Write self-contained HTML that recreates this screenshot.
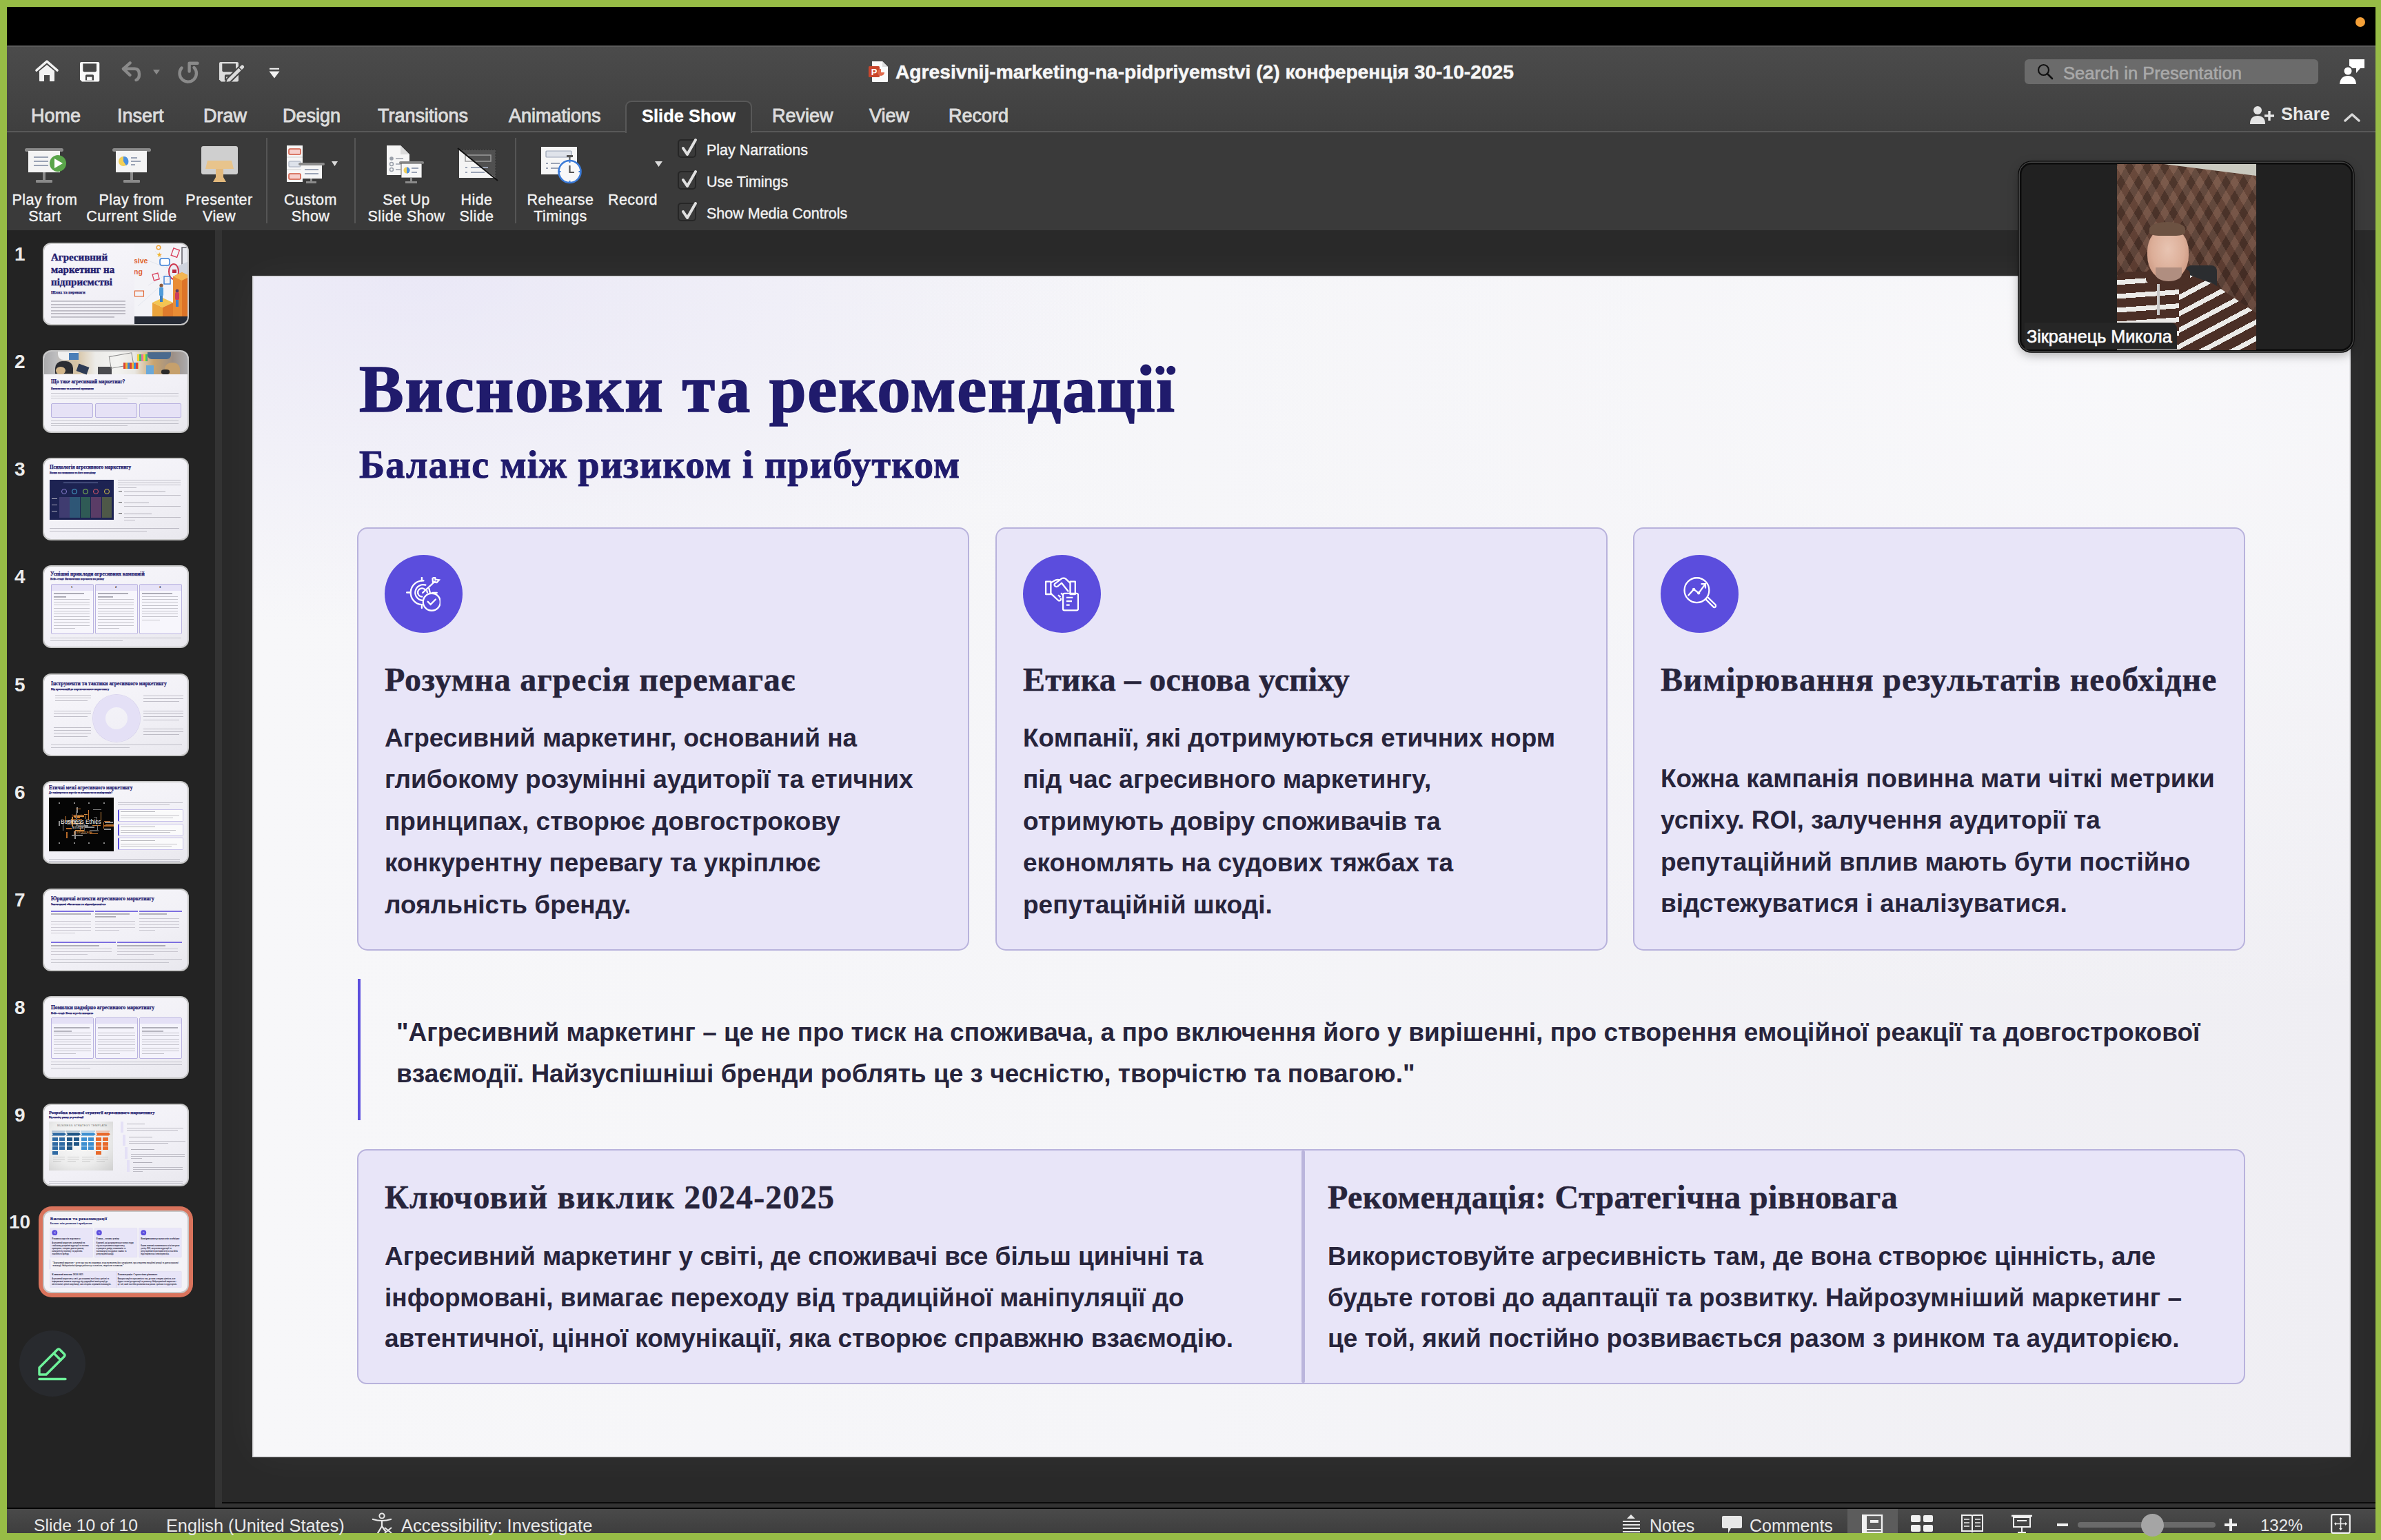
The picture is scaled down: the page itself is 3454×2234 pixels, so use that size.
<!DOCTYPE html>
<html><head><meta charset="utf-8">
<style>
*{margin:0;padding:0;box-sizing:border-box}
html,body{width:3454px;height:2234px;overflow:hidden;background:#97bc46;font-family:"Liberation Sans",sans-serif}
.a{position:absolute}
.t{position:absolute;white-space:nowrap;line-height:1}
/* chrome */
#black{left:10px;top:10px;width:3436px;height:56px;background:#000}
#tool{left:10px;top:66px;width:3436px;height:125px;background:linear-gradient(#4b4b4b,#3f3f3f);border-top:2px solid #5c5c5c}
#ribbon{left:10px;top:191px;width:3436px;height:143px;background:#3a3a3a}
#panel{left:10px;top:334px;width:302px;height:1854px;background:#232323}
#mainbot{left:322px;top:2179px;width:3124px;height:9px;background:#333;border-top:2px solid #0a0a0a}
#strip{left:312px;top:334px;width:10px;height:1854px;background:#333}
#main{left:322px;top:334px;width:3124px;height:1845px;background:#292929}
#status{left:10px;top:2187px;width:3436px;height:37px;background:linear-gradient(#4a4a4a,#3e3e3e);border-top:2px solid #000}
.tab{font-size:27px;color:#dcdcdc;-webkit-text-stroke:0.9px #dcdcdc}
.rb{font-size:21.5px;color:#f2f2f2;-webkit-text-stroke:0.4px #f2f2f2;text-align:center;line-height:23.5px;white-space:nowrap}
.sb{font-size:25px;color:#e8e8e8}

.th{position:absolute;left:62px;width:212px;height:120px;border-radius:12px;border:2px solid #c6c6c6;background:linear-gradient(160deg,#f8f7fb 0%,#f1f0f6 60%,#e9e8ee 100%);overflow:hidden}
.num{position:absolute;font-size:28px;font-weight:700;color:#ececec;line-height:1;white-space:nowrap}
.tt{position:absolute;font-family:"Liberation Serif",serif;font-weight:700;color:#24206f;white-space:nowrap;line-height:1;-webkit-text-stroke:0.25px #24206f}
.ln{position:absolute;height:1.6px;background:#8f8c9c;opacity:.55;transform:scaleY(.7)}
.bx{position:absolute;background:#e6e2f6;border:1px solid #b9b2e0;border-radius:2px}
/* slide */
#slide{left:366px;top:400px;width:3044px;height:1714px;background:radial-gradient(ellipse 35% 30% at 8% 0%,rgba(222,218,244,.5) 0%,rgba(222,218,244,0) 100%),radial-gradient(ellipse 60% 55% at 88% 8%,rgba(249,249,251,.9) 0%,rgba(249,249,251,0) 100%),linear-gradient(90deg,#f7f7f9 0%,#f5f5f8 45%,#efeef3 100%);box-shadow:inset 0 0 0 1.5px #d4d4d7,0 0 60px rgba(255,255,255,.045);overflow:hidden}
.ser{font-family:"Liberation Serif",serif;font-weight:700}
.card{position:absolute;top:365px;width:888px;height:614px;background:#e8e5f8;border:2px solid #b8b2dc;border-radius:15px}
.circ{position:absolute;width:113px;height:113px;border-radius:50%;background:#5b4ddd;top:38px;left:38px}
.ch{position:absolute;left:38px;font-size:48px;color:#27243b;-webkit-text-stroke:0.5px #27243b;white-space:nowrap;line-height:1}
.bd{position:absolute;left:38px;font-size:37px;font-weight:700;color:#27243b;line-height:60.45px;white-space:nowrap}
</style></head><body>
<div id="black" class="a"></div>
<div class="a" style="left:3417px;top:25px;width:14px;height:14px;border-radius:50%;background:#f4a038"></div>
<div id="tool" class="a"></div>
<div id="ribbon" class="a"></div>
<div id="panel" class="a"></div>
<div id="strip" class="a"></div>
<div id="main" class="a"></div>
<div id="mainbot" class="a"></div>
<div id="status" class="a"></div>

<!-- QUICK ACCESS -->
<svg class="a" style="left:50px;top:86px" width="36" height="34" viewBox="0 0 36 34">
 <path d="M3 16 L18 3 L33 16" fill="none" stroke="#f2f2f2" stroke-width="3.6" stroke-linecap="round" stroke-linejoin="round"/>
 <path d="M7 17 L18 8 L29 17 V31 Q29 32 28 32 H22 V23 H14 V32 H8 Q7 32 7 31 Z" fill="#f2f2f2"/>
</svg>
<svg class="a" style="left:116px;top:89.6px" width="29" height="29" viewBox="0 0 29 29">
 <path d="M2 0 H26.3 Q28.3 0 28.3 2 V26.4 Q28.3 28.4 26.3 28.4 H3 L0 25.4 V2 Q0 0 2 0 Z" fill="#fafafa"/>
 <path d="M4.3 2.3 H24 V12.2 Q24 14.2 22 14.2 H6.3 Q4.3 14.2 4.3 12.2 Z" fill="#474747"/>
 <path d="M7.9 26.4 V20 Q7.9 18.2 9.7 18.2 H18.3 Q20.1 18.2 20.1 20 V26.4 Z" fill="#474747"/>
 <rect x="10.1" y="21.6" width="7.4" height="4.8" fill="#fafafa"/>
</svg>
<svg class="a" style="left:176px;top:88px" width="60" height="34" viewBox="0 0 60 34">
 <path d="M3 11.8 H19.5 Q26 11.8 26 19.8 Q26 26.5 21.5 28" fill="none" stroke="#8a8a8a" stroke-width="4.4" stroke-linecap="round"/>
 <path d="M12.6 3.3 L3 11.8 L12.4 20.9" fill="none" stroke="#8a8a8a" stroke-width="4.4" stroke-linecap="round" stroke-linejoin="round"/>
 <path d="M45.9 13 H56 L51 20.3 Z" fill="#8a8a8a"/>
</svg>
<svg class="a" style="left:256px;top:88px" width="34" height="34" viewBox="0 0 34 34">
 <path d="M7.5 10.5 A12.2 12.2 0 1 0 25.5 10" fill="none" stroke="#8a8a8a" stroke-width="4.4" stroke-linecap="round"/>
 <path d="M30.5 3.8 H18.6 V15.5" fill="none" stroke="#8a8a8a" stroke-width="4.4" stroke-linecap="round" stroke-linejoin="round"/>
</svg>
<svg class="a" style="left:317.7px;top:90px" width="38" height="29" viewBox="0 0 38 29">
 <path d="M2 0 H26 Q28 0 28 2 V26.4 Q28 28.4 26 28.4 H3 L0 25.4 V2 Q0 0 2 0 Z" fill="#dcdcdc"/>
 <path d="M4.3 2.3 H24 V12.2 Q24 14.2 22 14.2 H6.3 Q4.3 14.2 4.3 12.2 Z" fill="#474747"/>
 <path d="M7.9 26.4 V20 Q7.9 18.2 9.7 18.2 H18.3 Q20.1 18.2 20.1 20 V26.4 Z" fill="#474747"/>
 <rect x="10.1" y="21.6" width="7.4" height="4.8" fill="#dcdcdc"/>
 <path d="M11 24.5 L31 4.5 Q33.5 2 36 4.5 Q38.5 7 36 9.5 L16 29 L9 30 Z" fill="#dcdcdc" stroke="#474747" stroke-width="2"/>
 <path d="M28 7.5 L33 12.5" stroke="#474747" stroke-width="1.6"/>
</svg>
<svg class="a" style="left:390px;top:98px" width="16" height="16" viewBox="0 0 16 16">
 <rect x="1" y="0.8" width="14" height="2" fill="#f2f2f2"/>
 <path d="M0.5 5.4 H15.5 L8 15.5 Z" fill="#f2f2f2"/>
</svg>

<!-- TITLE -->
<svg class="a" style="left:1259px;top:88px" width="31" height="33" viewBox="0 0 31 33">
 <path d="M6 1 H21 L29 9 V30 Q29 31 28 31 H7 Q6 31 6 30 Z" fill="#fafafa"/>
 <path d="M21 1 V9 H29" fill="#ddd"/>
 <rect x="1" y="8" width="16" height="16" rx="1.5" fill="#c9462c"/>
 <text x="9" y="21" font-family="Liberation Sans" font-weight="700" font-size="13" fill="#fff" text-anchor="middle">P</text>
 <path d="M19 12 A5 5 0 1 0 24 17 H19 Z" fill="#e06a4c"/>
</svg>
<div class="t" style="left:1299px;top:90px;font-size:28.2px;font-weight:700;color:#f7f7f7;-webkit-text-stroke:0.5px #f7f7f7">Agresivnij-marketing-na-pidpriyemstvi (2) конференція 30-10-2025</div>

<!-- SEARCH -->
<div class="a" style="left:2937px;top:86px;width:426px;height:36px;background:#6b6b6b;border-radius:6px"></div>
<svg class="a" style="left:2955px;top:92px" width="24" height="24" viewBox="0 0 24 24">
 <circle cx="9.5" cy="9.5" r="7.5" fill="none" stroke="#111" stroke-width="2.2"/>
 <path d="M15 15 L22 22" stroke="#111" stroke-width="2.6" stroke-linecap="round"/>
</svg>
<div class="t" style="left:2993px;top:94px;font-size:25.6px;color:#a9a9a9;-webkit-text-stroke:0.6px #a9a9a9">Search in Presentation</div>
<svg class="a" style="left:3394px;top:85px" width="38" height="38" viewBox="0 0 38 38">
 <path d="M14 1 H36 V14 H30 L24 21 V14 H14 Z" fill="#fff"/>
 <circle cx="12" cy="18" r="6.5" fill="#fff" stroke="#474747" stroke-width="2"/>
 <path d="M0 37 Q1 25 12 25 Q23 25 24 37 Z" fill="#fff"/>
</svg>

<!-- SHARE -->
<svg class="a" style="left:3264px;top:153px" width="38" height="28" viewBox="0 0 38 28">
 <circle cx="11" cy="7" r="6" fill="#e4e4e4"/>
 <path d="M0 27 Q0 15 11 15 Q22 15 22 27 Z" fill="#e4e4e4"/>
 <path d="M28 8 V22 M21 15 H35" stroke="#e4e4e4" stroke-width="3.4"/>
</svg>
<div class="t" style="left:3309px;top:153px;font-size:25.5px;font-weight:700;color:#e8e8e8">Share</div>
<svg class="a" style="left:3400px;top:163px" width="24" height="14" viewBox="0 0 24 14">
 <path d="M2 12 L12 3 L22 12" fill="none" stroke="#d8d8d8" stroke-width="3.4" stroke-linecap="round" stroke-linejoin="round"/>
</svg>


<!-- RIBBON -->
<svg class="a" style="left:34px;top:212px" width="66" height="56" viewBox="0 0 66 56">
 <rect x="2" y="3" width="56" height="5" rx="2.5" fill="#8a8a8a"/>
 <rect x="7" y="7" width="46" height="31" fill="#f4f4f4"/>
 <path d="M15 16 H36 M15 22 H36 M15 28 H36" stroke="#9aa3b5" stroke-width="2"/>
 <rect x="28" y="38" width="4" height="14" fill="#8a8a8a"/>
 <rect x="18" y="49" width="24" height="4" rx="1" fill="#8a8a8a"/>
 <circle cx="50" cy="25" r="12" fill="#5aa54a"/>
 <path d="M45 18 L57 25 L45 32 Z" fill="#fff"/>
</svg>
<svg class="a" style="left:161px;top:212px" width="60" height="56" viewBox="0 0 60 56">
 <rect x="2" y="3" width="56" height="5" rx="2.5" fill="#8a8a8a"/>
 <rect x="7" y="7" width="45" height="31" fill="#f4f4f4"/>
 <circle cx="18" cy="22" r="7" fill="#f2cf57"/>
 <path d="M18 15 A7 7 0 0 1 22 28 L18 22 Z" fill="#4a8fe0"/>
 <path d="M29 17 H38 M29 22 H43 M29 27 H35" stroke="#9aa3b5" stroke-width="2"/>
 <rect x="28" y="38" width="4" height="14" fill="#8a8a8a"/>
 <rect x="18" y="49" width="24" height="4" rx="1" fill="#8a8a8a"/>
</svg>
<svg class="a" style="left:291px;top:211px" width="56" height="56" viewBox="0 0 56 56">
 <rect x="1" y="1" width="53" height="41" rx="3" fill="#cfcfcf"/>
 <path d="M10 22 H45 L48 34 H7 Z" fill="#e8c48c"/>
 <path d="M22 34 H33 V46 L37 53 H18 L22 46 Z" fill="#e3b97c"/>
</svg>
<svg class="a" style="left:414px;top:210px" width="80" height="58" viewBox="0 0 80 58">
 <rect x="2" y="1" width="23" height="53" fill="#f6f6f6"/>
 <path d="M2 18 H25 M2 36 H25" stroke="#cfcfcf" stroke-width="1"/>
 <rect x="5" y="6" width="17" height="8" rx="1.5" fill="#f6d0cc" stroke="#d0553e" stroke-width="1.5"/>
 <rect x="5" y="24" width="17" height="8" rx="1.5" fill="#dde2ea" stroke="#b8bfcc" stroke-width="1.5"/>
 <rect x="5" y="42" width="17" height="8" rx="1.5" fill="#f6d0cc" stroke="#d0553e" stroke-width="1.5"/>
 <rect x="19" y="26" width="38" height="4" rx="2" fill="#8a8a8a"/>
 <rect x="23" y="30" width="30" height="19" fill="#f6f6f6"/>
 <path d="M28 36 H48 M28 42 H48" stroke="#9aa3b5" stroke-width="2"/>
 <rect x="36" y="49" width="3" height="5" fill="#8a8a8a"/>
 <rect x="30" y="53" width="15" height="3" fill="#8a8a8a"/>
 <path d="M67 24 H76 L71.5 31 Z" fill="#dcdcdc"/>
</svg>
<svg class="a" style="left:559px;top:210px" width="60" height="58" viewBox="0 0 60 58">
 <path d="M2 1 H22 L35 14 V44 H2 Z" fill="#f6f6f6"/>
 <path d="M22 1 V14 H35" fill="#dadada"/>
 <circle cx="9" cy="20" r="2.8" fill="#9aa0aa"/><circle cx="9" cy="28" r="2.5" fill="none" stroke="#9aa0aa" stroke-width="1.5"/><circle cx="9" cy="36" r="2.5" fill="none" stroke="#9aa0aa" stroke-width="1.5"/>
 <path d="M15 20 H26 M15 28 H22 M15 36 H22" stroke="#9aa0aa" stroke-width="1.6"/>
 <rect x="20" y="24" width="36" height="4" rx="2" fill="#8a8a8a"/>
 <rect x="23" y="27" width="30" height="21" fill="#f6f6f6" stroke="#3a3a3a" stroke-width="0.8"/>
 <circle cx="31" cy="37" r="4.5" fill="#f2cf57"/><path d="M31 32.5 A4.5 4.5 0 0 1 31 41.5 Z" fill="#4a8fe0"/>
 <path d="M38 34 H48 M38 40 H46" stroke="#9aa3b5" stroke-width="1.8"/>
 <rect x="36" y="48" width="3" height="6" fill="#8a8a8a"/>
 <rect x="29" y="53" width="17" height="3" fill="#8a8a8a"/>
</svg>
<svg class="a" style="left:663px;top:213px" width="60" height="52" viewBox="0 0 60 52">
 <rect x="3" y="4" width="53" height="41" fill="#f4f4f4"/>
 <path d="M3 4 H56 V45 Z" fill="#505050"/>
 <path d="M3 4 H56 V45" fill="none" stroke="#2a2a2a" stroke-width="1" stroke-dasharray="2 2"/>
 <rect x="12" y="12" width="37" height="9" fill="none" stroke="#9a9a9a" stroke-width="1.5"/>
 <path d="M12 30 H15 M20 30 H45 M12 37 H15 M20 37 H40" stroke="#9aa3b5" stroke-width="2"/>
 <path d="M1 2 L59 49" stroke="#111" stroke-width="2"/>
</svg>
<svg class="a" style="left:782px;top:211px" width="66" height="62" viewBox="0 0 66 62">
 <rect x="3" y="2" width="52" height="40" fill="#f6f6f6"/>
 <rect x="10" y="8" width="37" height="9" rx="1" fill="#dfe3ea" stroke="#9aa3b5" stroke-width="1.2"/>
 <path d="M10 26 H13 M17 26 H30 M10 33 H13 M17 33 H28" stroke="#9aa3b5" stroke-width="2"/>
 <rect x="40" y="14" width="9" height="3" fill="#555"/>
 <rect x="43.5" y="16" width="2" height="5" fill="#555"/>
 <circle cx="44.5" cy="38" r="16" fill="#f8f8f8" stroke="#3b7bd8" stroke-width="2.6"/>
 <path d="M44.5 29 V39 H51" fill="none" stroke="#555" stroke-width="2.2"/>
 <path d="M44.5 22 V25 M44.5 51 V54 M28.5 38 H31.5 M57.5 38 H60.5" stroke="#3b7bd8" stroke-width="2"/>
</svg>
<svg class="a" style="left:949px;top:233px" width="13" height="10" viewBox="0 0 13 10"><path d="M1 1 H12 L6.5 9 Z" fill="#dcdcdc"/></svg>
<div class="a" style="left:386px;top:200px;width:2px;height:124px;background:#555"></div>
<div class="a" style="left:514px;top:200px;width:2px;height:124px;background:#555"></div>
<div class="a" style="left:747px;top:200px;width:2px;height:124px;background:#555"></div>

<div class="rb a" style="letter-spacing:0.45px;left:5px;top:279px;width:120px">Play from<br>Start</div>
<div class="rb a" style="letter-spacing:0.45px;left:121px;top:279px;width:140px">Play from<br>Current Slide</div>
<div class="rb a" style="letter-spacing:0.45px;left:263px;top:279px;width:110px">Presenter<br>View</div>
<div class="rb a" style="letter-spacing:0.45px;left:400px;top:279px;width:101px">Custom<br>Show</div>
<div class="rb a" style="letter-spacing:0.45px;left:527px;top:279px;width:125px">Set Up<br>Slide Show</div>
<div class="rb a" style="letter-spacing:0.45px;left:651px;top:279px;width:81px">Hide<br>Slide</div>
<div class="rb a" style="letter-spacing:0.45px;left:758px;top:279px;width:110px">Rehearse<br>Timings</div>
<div class="rb a" style="letter-spacing:0.45px;left:873px;top:279px;width:90px">Record</div>

<div class="a" style="left:983px;top:202px;width:27px;height:27px;border:2px solid #262626;border-radius:5px"></div>
<div class="a" style="left:983px;top:248px;width:27px;height:27px;border:2px solid #262626;border-radius:5px"></div>
<div class="a" style="left:983px;top:294px;width:27px;height:27px;border:2px solid #262626;border-radius:5px"></div>
<svg class="a" style="left:987.5px;top:200px" width="26" height="126" viewBox="0 0 26 126">
 <path d="M3 15 L9 24 L21 3" fill="none" stroke="#e0e0e0" stroke-width="4" stroke-linecap="round" stroke-linejoin="round"/>
 <path d="M3 61 L9 70 L21 49" fill="none" stroke="#e0e0e0" stroke-width="4" stroke-linecap="round" stroke-linejoin="round"/>
 <path d="M3 107 L9 116 L21 95" fill="none" stroke="#e0e0e0" stroke-width="4" stroke-linecap="round" stroke-linejoin="round"/>
</svg>
<div class="t rb" style="left:1025px;top:207px;text-align:left">Play Narrations</div>
<div class="t rb" style="left:1025px;top:253px;text-align:left">Use Timings</div>
<div class="t rb" style="left:1025px;top:299px;text-align:left">Show Media Controls</div>

<!-- TABS -->
<div class="a" style="left:10px;top:190px;width:3436px;height:1.5px;background:#585858"></div>
<div class="a" style="left:907px;top:146px;width:184px;height:47px;background:#3a3a3a;border:2px solid #585858;border-bottom:none;border-radius:9px 9px 0 0"></div>
<div class="t tab" style="left:45px;top:154.5px">Home</div>
<div class="t tab" style="left:170px;top:154.5px">Insert</div>
<div class="t tab" style="left:295px;top:154.5px">Draw</div>
<div class="t tab" style="left:410px;top:154.5px">Design</div>
<div class="t tab" style="left:548px;top:154.5px">Transitions</div>
<div class="t tab" style="left:738px;top:154.5px">Animations</div>
<div class="t tab" style="left:931px;top:155.5px;font-weight:700;font-size:25.5px;color:#fff;-webkit-text-stroke:0.3px #fff">Slide Show</div>
<div class="t tab" style="left:1120px;top:154.5px">Review</div>
<div class="t tab" style="left:1261px;top:154.5px">View</div>
<div class="t tab" style="left:1376px;top:154.5px">Record</div>



<!-- STATUS -->
<div class="t sb" style="left:49px;top:2201px;font-size:24.7px">Slide 10 of 10</div>
<div class="t sb" style="left:241px;top:2201px;font-size:25.3px">English (United States)</div>
<svg class="a" style="left:539px;top:2194px" width="32" height="30" viewBox="0 0 32 30">
 <circle cx="15" cy="5" r="3.6" fill="none" stroke="#e8e8e8" stroke-width="2"/>
 <path d="M2 10 Q15 14 28 10 M15 12 V20 L9 30 M15 20 L20 27" fill="none" stroke="#e8e8e8" stroke-width="2.2" stroke-linecap="round"/>
 <path d="M19 22 L29 30 M29 22 L19 30" stroke="#e8e8e8" stroke-width="2"/>
</svg>
<div class="t sb" style="left:582px;top:2201px;font-size:25.6px">Accessibility: Investigate</div>

<svg class="a" style="left:2352px;top:2195px" width="30" height="28" viewBox="0 0 30 28">
 <path d="M8 8 L14 2 L20 8 Z" fill="#e8e8e8"/>
 <path d="M2 12 H27 M2 17 H27 M2 22 H27 M2 27 H27" stroke="#e8e8e8" stroke-width="2"/>
</svg>
<div class="t sb" style="left:2393px;top:2201px">Notes</div>
<svg class="a" style="left:2498px;top:2198px" width="30" height="28" viewBox="0 0 30 28">
 <path d="M2 1 H27 Q29 1 29 3 V17 Q29 19 27 19 H13 L9 26 L9 19 H2 Q0 19 0 17 V3 Q0 1 2 1 Z" fill="#e8e8e8"/>
</svg>
<div class="t sb" style="left:2538px;top:2201px">Comments</div>
<div class="a" style="left:2680px;top:2189px;width:73px;height:35px;background:#5c5c5c"></div>
<svg class="a" style="left:2701px;top:2197px" width="32" height="27" viewBox="0 0 32 27">
 <rect x="1" y="1" width="28" height="25" fill="none" stroke="#f0f0f0" stroke-width="2.4"/>
 <rect x="1" y="1" width="6" height="25" fill="#f0f0f0"/>
 <rect x="12" y="8" width="12" height="4" fill="#f0f0f0"/>
 <path d="M7 22 H29" stroke="#f0f0f0" stroke-width="2"/>
</svg>
<svg class="a" style="left:2772px;top:2198px" width="33" height="26" viewBox="0 0 33 26">
 <rect x="0" y="0" width="14" height="10" rx="2" fill="#f0f0f0"/><rect x="18" y="0" width="14" height="10" rx="2" fill="#f0f0f0"/>
 <rect x="0" y="14" width="14" height="10" rx="2" fill="#f0f0f0"/><rect x="18" y="14" width="14" height="10" rx="2" fill="#f0f0f0"/>
</svg>
<svg class="a" style="left:2844px;top:2196px" width="34" height="28" viewBox="0 0 34 28">
 <path d="M2 2 H15 Q17 2 17 4 V27 Q17 25 15 25 H2 Z M32 2 H19 Q17 2 17 4 V27 Q17 25 19 25 H32 Z" fill="none" stroke="#f0f0f0" stroke-width="2"/>
 <path d="M5 8 H13 M5 13 H13 M5 18 H13 M21 8 H29 M21 13 H29 M21 18 H29" stroke="#f0f0f0" stroke-width="1.6"/>
</svg>
<svg class="a" style="left:2917px;top:2197px" width="32" height="28" viewBox="0 0 32 28">
 <path d="M1 2 H31" stroke="#f0f0f0" stroke-width="2.6"/>
 <rect x="4" y="4" width="24" height="14" fill="none" stroke="#f0f0f0" stroke-width="2"/>
 <path d="M9 9 H23" stroke="#f0f0f0" stroke-width="2"/>
 <path d="M16 18 V25 M10 26 H22" stroke="#f0f0f0" stroke-width="2"/>
</svg>
<div class="a" style="left:2984px;top:2210px;width:16px;height:4px;background:#f0f0f0"></div>
<div class="a" style="left:3014px;top:2208px;width:200px;height:8px;border-radius:4px;background:#6a6a6a"></div>
<div class="a" style="left:3106px;top:2196px;width:33px;height:33px;border-radius:50%;background:#a5a5a5"></div>
<div class="a" style="left:3227px;top:2210px;width:18px;height:4px;background:#f0f0f0"></div>
<div class="a" style="left:3234px;top:2203px;width:4px;height:18px;background:#f0f0f0"></div>
<div class="t sb" style="left:3279px;top:2201px;font-size:24px">132%</div>
<svg class="a" style="left:3381px;top:2196px" width="29" height="29" viewBox="0 0 29 29">
 <rect x="1.2" y="1.2" width="26.6" height="26.6" rx="2" fill="none" stroke="#f0f0f0" stroke-width="2.2"/>
 <path d="M14.5 6 V23 M6 14.5 H23" stroke="#f0f0f0" stroke-width="1.6"/>
 <path d="M14.5 5 L12 8 H17 Z M14.5 24 L12 21 H17 Z M5 14.5 L8 12 V17 Z M24 14.5 L21 12 V17 Z" fill="#f0f0f0"/>
</svg>

<!-- THUMBS -->
<div class="num" style="left:21px;top:354.5px">1</div><div class="num" style="left:21px;top:510.5px">2</div><div class="num" style="left:21px;top:666.5px">3</div><div class="num" style="left:21px;top:822.5px">4</div><div class="num" style="left:21px;top:979.5px">5</div><div class="num" style="left:21px;top:1135.5px">6</div><div class="num" style="left:21px;top:1291.5px">7</div><div class="num" style="left:21px;top:1447.5px">8</div><div class="num" style="left:21px;top:1603.5px">9</div><div class="th" style="top:352px">
<div class="tt" style="left:10px;top:11px;font-size:15px;line-height:17.8px;-webkit-text-stroke:0.4px #24206f">Агресивний<br>маркетинг на<br>підприємстві</div>
<div class="tt" style="left:10px;top:67px;font-size:6px">Шлях та переваги</div>
<div class="ln" style="left:10px;top:82.0px;width:108px;height:1.5px;background:#77737f"></div><div class="ln" style="left:10px;top:86.6px;width:108px;height:1.5px;background:#77737f"></div><div class="ln" style="left:10px;top:91.2px;width:108px;height:1.5px;background:#77737f"></div><div class="ln" style="left:10px;top:95.8px;width:108px;height:1.5px;background:#77737f"></div><div class="ln" style="left:10px;top:100.4px;width:108px;height:1.5px;background:#77737f"></div><div class="ln" style="left:10px;top:105.0px;width:92px;height:1.5px;background:#77737f"></div>
<svg class="a" style="left:131px;top:0" width="81" height="120" viewBox="0 0 81 120">
 <rect x="0" y="0" width="81" height="105" fill="#f3f3f7"/>
 <path d="M10 20 L60 40 M20 60 L70 30 M5 90 L50 50 M30 10 L75 70" stroke="#dfe3ec" stroke-width="0.8"/>
 <text x="-1" y="28" font-family="Liberation Sans" font-weight="700" font-size="10.5" fill="#e0632f">sive</text>
 <text x="-1" y="44" font-family="Liberation Sans" font-weight="700" font-size="10.5" fill="#e0632f">ng</text>
 <rect x="0.5" y="68" width="13" height="8" fill="none" stroke="#e0632f" stroke-width="1.1"/>
 <circle cx="35" cy="5" r="2.8" fill="none" stroke="#f0a030" stroke-width="1.4"/>
 <text x="32" y="19" font-family="Liberation Sans" font-size="10" fill="#f2b230">★</text>
 <rect x="55" y="7" width="9" height="11" fill="none" stroke="#d9435f" stroke-width="1.4" transform="rotate(20 59 12)"/>
 <rect x="37" y="21" width="14" height="10" rx="3" fill="#fff" stroke="#3b7fd6" stroke-width="1.5"/>
 <rect x="69" y="5" width="11" height="28" fill="#e8eaf0" stroke="#606068" stroke-width="1.5"/>
 <path d="M60 33 L81 24 V53 L60 46 Z" fill="#cfd4de"/>
 <ellipse cx="57" cy="40" rx="7" ry="11" fill="#eceef4" stroke="#cf3a50" stroke-width="2"/>
 <rect x="55" y="37" width="6" height="5" fill="#b8283e"/>
 <rect x="27" y="43" width="8" height="9" fill="none" stroke="#d9435f" stroke-width="1.3" transform="rotate(-15 31 47)"/>
 <rect x="43" y="47" width="9" height="11" fill="none" stroke="#3b7fd6" stroke-width="1.4"/>
 <text x="60" y="76" font-family="Liberation Sans" font-size="9" fill="#f2c230">★</text>
 <path d="M26 85 L41 78 L56 85 L41 92 Z" fill="#f3c553"/>
 <path d="M26 85 L41 92 V105 H26 Z" fill="#eba43c"/>
 <path d="M41 92 L56 85 V105 H41 Z" fill="#df7b2d"/>
 <path d="M56 47 L69 41 L81 47 V105 H56 Z" fill="#e98d35"/>
 <path d="M56 47 L69 41 L81 47 L69 53 Z" fill="#f3b653"/>
 <path d="M69 53 L81 47 V105 H69 Z" fill="#dd7428"/>
 <circle cx="39" cy="60" r="2.6" fill="#8b5a3c"/>
 <rect x="36" y="62.5" width="6" height="13" rx="2" fill="#4f9bd9"/>
 <rect x="37" y="75" width="4" height="9" fill="#3d7fbf"/>
 <circle cx="62" cy="68" r="2.4" fill="#5a3a6a"/>
 <rect x="59" y="70" width="6" height="11" rx="2" fill="#cc3d5c"/>
 <rect x="60" y="81" width="4" height="10" fill="#3b7fd6"/>
 <rect x="0" y="105" width="81" height="15" fill="#252a35"/>
</svg>
</div><div class="th" style="top:508px">
<div class="a" style="left:0;top:0;width:212px;height:33px;background:linear-gradient(90deg,#a9a9ab 0%,#bdbdbf 8%,#d6c3a3 22%,#ecebe8 35%,#f3f3f1 50%,#e9e7e2 62%,#c9a46f 75%,#9c8f86 88%,#aeb0b4 100%)"></div>
<div class="a" style="left:20px;top:0;width:30px;height:12px;background:#f0f0f0;border-radius:0 0 8px 8px"></div>
<div class="a" style="left:16px;top:14px;width:26px;height:18px;background:#2b2c31;border-radius:10px 10px 0 0"></div>
<div class="a" style="left:17px;top:22px;width:14px;height:11px;background:#d2b58a;border-radius:50%"></div>
<div class="a" style="left:48px;top:20px;width:16px;height:11px;background:#2d3b55;transform:rotate(20deg)"></div>
<div class="a" style="left:36px;top:2px;width:14px;height:10px;background:#4b7fb8"></div>
<div class="a" style="left:78px;top:22px;width:20px;height:11px;background:#4a4a4e"></div>
<div class="a" style="left:95px;top:4px;width:34px;height:18px;border:1px solid #8a8a8a;transform:rotate(-10deg)"></div>
<div class="a" style="left:115px;top:16px;width:22px;height:9px;background:repeating-linear-gradient(90deg,#d8433a 0 3px,#f2b233 3px 6px,#3c8ad6 6px 9px)"></div>
<div class="a" style="left:135px;top:4px;width:16px;height:10px;background:repeating-linear-gradient(90deg,#f2d233 0 3px,#3cc46a 3px 6px,#e86fa3 6px 9px)"></div>
<div class="a" style="left:150px;top:1px;width:34px;height:10px;background:#4a6a8e;border-radius:0 0 6px 6px"></div>
<div class="a" style="left:175px;top:16px;width:22px;height:17px;background:#c6a06c;border-radius:50% 50% 0 0"></div>
<div class="a" style="left:170px;top:26px;width:12px;height:7px;background:#2a2a2a;border-radius:40%"></div>
<div class="a" style="left:148px;top:20px;width:11px;height:13px;background:#6aa8d8"></div>
<div class="tt" style="left:10px;top:41px;font-size:7.2px">Що таке агресивний маркетинг?</div>
<div class="tt" style="left:10px;top:52px;font-size:4px">Визначення та ключові принципи</div>
<div class="ln" style="left:10px;top:60.0px;width:185px;height:1.3px;background:#807d8c"></div><div class="ln" style="left:10px;top:63.6px;width:185px;height:1.3px;background:#807d8c"></div><div class="ln" style="left:10px;top:67.2px;width:111px;height:1.3px;background:#807d8c"></div>
<div class="bx" style="left:10px;top:75px;width:61px;height:21px"></div>
<div class="bx" style="left:74px;top:75px;width:61px;height:21px"></div>
<div class="bx" style="left:138px;top:75px;width:61px;height:21px"></div>
<div class="ln" style="left:10px;top:100.0px;width:185px;height:1.3px;background:#807d8c"></div><div class="ln" style="left:10px;top:103.6px;width:185px;height:1.3px;background:#807d8c"></div><div class="ln" style="left:10px;top:107.2px;width:111px;height:1.3px;background:#807d8c"></div>
</div><div class="th" style="top:664px">
<div class="tt" style="left:8px;top:9px;font-size:7.2px">Психологія агресивного маркетингу</div>
<div class="tt" style="left:8px;top:18.5px;font-size:3.8px">Вплив на споживача та його поведінку</div>
<div class="a" style="left:8px;top:29.6px;width:93px;height:58.4px;background:#1d2352;overflow:hidden">
<div class="a" style="left:20px;top:4px;width:50px;height:1.5px;background:#6d78a8"></div>
<div class="a" style="left:14.0px;top:25px;width:14.6px;height:30px;background:#3f3c70"></div><div class="a" style="left:17.0px;top:13px;width:8px;height:8px;border-radius:50%;border:1px solid #8a7fd0"></div><div class="a" style="left:29.4px;top:25px;width:14.6px;height:30px;background:#2e5676"></div><div class="a" style="left:32.4px;top:13px;width:8px;height:8px;border-radius:50%;border:1px solid #49b0d8"></div><div class="a" style="left:44.8px;top:25px;width:14.6px;height:30px;background:#2f5a55"></div><div class="a" style="left:47.8px;top:13px;width:8px;height:8px;border-radius:50%;border:1px solid #8ccf52"></div><div class="a" style="left:60.2px;top:25px;width:14.6px;height:30px;background:#5a3c66"></div><div class="a" style="left:63.2px;top:13px;width:8px;height:8px;border-radius:50%;border:1px solid #e05a6a"></div><div class="a" style="left:75.6px;top:25px;width:14.6px;height:30px;background:#4e5848"></div><div class="a" style="left:78.6px;top:13px;width:8px;height:8px;border-radius:50%;border:1px solid #d6c24a"></div>
<div class="a" style="left:3px;top:27px;width:8px;height:1.5px;background:#aab"></div><div class="a" style="left:3px;top:36px;width:8px;height:1.5px;background:#aab"></div><div class="a" style="left:3px;top:45px;width:8px;height:1.5px;background:#aab"></div>
</div>
<div class="ln" style="left:107px;top:30.0px;width:91px;height:1.1px;background:#6f6c7b"></div><div class="ln" style="left:107px;top:33.6px;width:91px;height:1.1px;background:#6f6c7b"></div><div class="ln" style="left:107px;top:37.2px;width:91px;height:1.1px;background:#6f6c7b"></div><div class="ln" style="left:107px;top:40.8px;width:27px;height:1.1px;background:#6f6c7b"></div>
<div class="a" style="left:108px;top:46px;width:5px;height:1px;background:#555"></div><div class="ln" style="left:116px;top:46.5px;width:60px;height:1.3px;background:#4b4858"></div><div class="ln" style="left:116px;top:52.0px;width:82px;height:1.1px;background:#6f6c7b"></div>
<div class="a" style="left:108px;top:62px;width:5px;height:1px;background:#555"></div><div class="ln" style="left:116px;top:62.5px;width:36px;height:1.3px;background:#4b4858"></div><div class="ln" style="left:116px;top:68.0px;width:82px;height:1.1px;background:#6f6c7b"></div>
<div class="a" style="left:108px;top:78px;width:5px;height:1px;background:#555"></div><div class="ln" style="left:116px;top:78.5px;width:40px;height:1.3px;background:#4b4858"></div><div class="ln" style="left:116px;top:84.0px;width:82px;height:1.1px;background:#6f6c7b"></div><div class="ln" style="left:116px;top:87.5px;width:16px;height:1.1px;background:#6f6c7b"></div>
<div class="ln" style="left:8px;top:100.0px;width:188px;height:1.1px;background:#6f6c7b"></div><div class="ln" style="left:8px;top:104.0px;width:141px;height:1.1px;background:#6f6c7b"></div>
</div>
<div class="th" style="top:820px">
<div class="tt" style="left:9px;top:7px;font-size:7.5px">Успішні приклади агресивних кампаній</div>
<div class="tt" style="left:9px;top:16px;font-size:4px">Кейс-стаді: Визначення перемоги на ринку</div>
<div class="bx" style="left:9.5px;top:25.3px;width:62px;height:72.5px;background:#f7f6fc"></div>
<div class="bx" style="left:73.5px;top:25.3px;width:62px;height:72.5px;background:#f7f6fc"></div>
<div class="bx" style="left:137.5px;top:25.3px;width:62px;height:72.5px;background:#f7f6fc"></div>
<div class="a" style="left:10.5px;top:26.3px;width:60px;height:8.5px;background:#e6e2f7"></div>
<div class="a" style="left:74.5px;top:26.3px;width:60px;height:8.5px;background:#e6e2f7"></div>
<div class="a" style="left:138.5px;top:26.3px;width:60px;height:8.5px;background:#e6e2f7"></div>
<div class="a" style="left:39px;top:27px;font-size:4px;font-weight:700;color:#222">1</div><div class="a" style="left:103px;top:27px;font-size:4px;font-weight:700;color:#222">2</div><div class="a" style="left:167px;top:27px;font-size:4px;font-weight:700;color:#222">3</div>
<div class="ln" style="left:14px;top:38.0px;width:44px;height:1.5px;background:#3b3848"></div><div class="ln" style="left:14px;top:42.5px;width:18px;height:1.5px;background:#3b3848"></div><div class="ln" style="left:78px;top:38.0px;width:44px;height:1.5px;background:#3b3848"></div><div class="ln" style="left:78px;top:42.5px;width:22px;height:1.5px;background:#3b3848"></div><div class="ln" style="left:142px;top:38.0px;width:44px;height:1.5px;background:#3b3848"></div>
<div class="ln" style="left:14px;top:47.0px;width:52px;height:1.1px;background:#75727f"></div><div class="ln" style="left:14px;top:51.2px;width:52px;height:1.1px;background:#75727f"></div><div class="ln" style="left:14px;top:55.4px;width:52px;height:1.1px;background:#75727f"></div><div class="ln" style="left:14px;top:59.6px;width:52px;height:1.1px;background:#75727f"></div><div class="ln" style="left:14px;top:63.8px;width:52px;height:1.1px;background:#75727f"></div><div class="ln" style="left:14px;top:68.0px;width:52px;height:1.1px;background:#75727f"></div><div class="ln" style="left:14px;top:72.2px;width:52px;height:1.1px;background:#75727f"></div><div class="ln" style="left:14px;top:76.4px;width:52px;height:1.1px;background:#75727f"></div><div class="ln" style="left:14px;top:80.6px;width:52px;height:1.1px;background:#75727f"></div><div class="ln" style="left:14px;top:84.8px;width:52px;height:1.1px;background:#75727f"></div><div class="ln" style="left:14px;top:89.0px;width:31px;height:1.1px;background:#75727f"></div><div class="ln" style="left:78px;top:47.0px;width:52px;height:1.1px;background:#75727f"></div><div class="ln" style="left:78px;top:51.2px;width:52px;height:1.1px;background:#75727f"></div><div class="ln" style="left:78px;top:55.4px;width:52px;height:1.1px;background:#75727f"></div><div class="ln" style="left:78px;top:59.6px;width:52px;height:1.1px;background:#75727f"></div><div class="ln" style="left:78px;top:63.8px;width:52px;height:1.1px;background:#75727f"></div><div class="ln" style="left:78px;top:68.0px;width:52px;height:1.1px;background:#75727f"></div><div class="ln" style="left:78px;top:72.2px;width:52px;height:1.1px;background:#75727f"></div><div class="ln" style="left:78px;top:76.4px;width:52px;height:1.1px;background:#75727f"></div><div class="ln" style="left:78px;top:80.6px;width:52px;height:1.1px;background:#75727f"></div><div class="ln" style="left:78px;top:84.8px;width:52px;height:1.1px;background:#75727f"></div><div class="ln" style="left:78px;top:89.0px;width:31px;height:1.1px;background:#75727f"></div><div class="ln" style="left:142px;top:43.0px;width:52px;height:1.1px;background:#75727f"></div><div class="ln" style="left:142px;top:47.2px;width:52px;height:1.1px;background:#75727f"></div><div class="ln" style="left:142px;top:51.4px;width:52px;height:1.1px;background:#75727f"></div><div class="ln" style="left:142px;top:55.6px;width:52px;height:1.1px;background:#75727f"></div><div class="ln" style="left:142px;top:59.8px;width:52px;height:1.1px;background:#75727f"></div><div class="ln" style="left:142px;top:64.0px;width:52px;height:1.1px;background:#75727f"></div><div class="ln" style="left:142px;top:68.2px;width:52px;height:1.1px;background:#75727f"></div><div class="ln" style="left:142px;top:72.4px;width:52px;height:1.1px;background:#75727f"></div><div class="ln" style="left:142px;top:76.6px;width:26px;height:1.1px;background:#75727f"></div>
<div class="ln" style="left:9px;top:102.5px;width:190px;height:1.2px;background:#807d8c"></div><div class="ln" style="left:9px;top:107.0px;width:105px;height:1.2px;background:#807d8c"></div>
</div>
<div class="th" style="top:977px">
<div class="tt" style="left:10px;top:9px;font-size:7.5px">Інструменти та тактики агресивного маркетингу</div>
<div class="tt" style="left:10px;top:19px;font-size:4px">Від провокацій до партизанського маркетингу</div>
<div class="a" style="left:71px;top:29px;width:68px;height:68px;border-radius:50%;border:18px solid #e4e0f6;box-shadow:0 0 0 1px #d8d3ee"></div>
<div class="ln" style="left:16px;top:29.0px;width:52px;height:1.2px;background:#6f6c7b"></div><div class="ln" style="left:16px;top:33.2px;width:52px;height:1.2px;background:#6f6c7b"></div><div class="ln" style="left:16px;top:37.4px;width:47px;height:1.2px;background:#6f6c7b"></div>
<div class="ln" style="left:14px;top:52.0px;width:54px;height:1.2px;background:#6f6c7b"></div><div class="ln" style="left:14px;top:56.2px;width:54px;height:1.2px;background:#6f6c7b"></div><div class="ln" style="left:14px;top:60.4px;width:49px;height:1.2px;background:#6f6c7b"></div>
<div class="ln" style="left:14px;top:76.0px;width:54px;height:1.2px;background:#6f6c7b"></div><div class="ln" style="left:14px;top:80.2px;width:54px;height:1.2px;background:#6f6c7b"></div><div class="ln" style="left:14px;top:84.4px;width:54px;height:1.2px;background:#6f6c7b"></div><div class="ln" style="left:14px;top:88.6px;width:49px;height:1.2px;background:#6f6c7b"></div>
<div class="ln" style="left:144px;top:30.0px;width:58px;height:1.2px;background:#6f6c7b"></div><div class="ln" style="left:144px;top:34.2px;width:58px;height:1.2px;background:#6f6c7b"></div><div class="ln" style="left:144px;top:38.4px;width:52px;height:1.2px;background:#6f6c7b"></div>
<div class="ln" style="left:144px;top:52.0px;width:58px;height:1.2px;background:#6f6c7b"></div><div class="ln" style="left:144px;top:56.2px;width:58px;height:1.2px;background:#6f6c7b"></div><div class="ln" style="left:144px;top:60.4px;width:58px;height:1.2px;background:#6f6c7b"></div><div class="ln" style="left:144px;top:64.6px;width:52px;height:1.2px;background:#6f6c7b"></div>
<div class="ln" style="left:144px;top:78.0px;width:58px;height:1.2px;background:#6f6c7b"></div><div class="ln" style="left:144px;top:82.2px;width:58px;height:1.2px;background:#6f6c7b"></div><div class="ln" style="left:144px;top:86.4px;width:52px;height:1.2px;background:#6f6c7b"></div>
<div class="ln" style="left:10px;top:101.0px;width:190px;height:1.3px;background:#807d8c"></div><div class="ln" style="left:10px;top:105.2px;width:114px;height:1.3px;background:#807d8c"></div>
</div><div class="th" style="top:1133px">
<div class="tt" style="left:7px;top:5px;font-size:7.2px">Етичні межі агресивного маркетингу</div>
<div class="tt" style="left:7px;top:14px;font-size:3.8px">Де закінчується агресія та починається маніпуляція?</div>
<div class="a" style="left:7px;top:22px;width:94px;height:78px;background:#050505;overflow:hidden">
<div class="a" style="left:79.9px;top:44.8px;width:10px;height:2px;background:#909090"></div><div class="a" style="left:58.7px;top:51.7px;width:12px;height:1.2px;background:#c8772e"></div><div class="a" style="left:51.2px;top:37.7px;width:1.2px;height:11px;background:#5f5f5f"></div><div class="a" style="left:25.1px;top:50.3px;width:1.6px;height:9px;background:#b86a28"></div><div class="a" style="left:56.5px;top:18.4px;width:1.2px;height:14px;background:#c8772e"></div><div class="a" style="left:24.0px;top:26.5px;width:1.2px;height:8px;background:#c8772e"></div><div class="a" style="left:39.6px;top:13.9px;width:2px;height:8px;background:#909090"></div><div class="a" style="left:35.9px;top:48.1px;width:1.6px;height:6px;background:#b86a28"></div><div class="a" style="left:36.3px;top:26.3px;width:15px;height:2px;background:#d08a40"></div><div class="a" style="left:25.3px;top:33.3px;width:16px;height:1.6px;background:#5f5f5f"></div><div class="a" style="left:68.7px;top:28.7px;width:1.2px;height:10px;background:#7a7a7a"></div><div class="a" style="left:63.0px;top:39.8px;width:12px;height:1.2px;background:#c8772e"></div><div class="a" style="left:36.8px;top:28.3px;width:8px;height:1.6px;background:#c8772e"></div><div class="a" style="left:65.9px;top:47.3px;width:6px;height:2px;background:#5f5f5f"></div><div class="a" style="left:27.0px;top:35.1px;width:11px;height:1.2px;background:#c8772e"></div><div class="a" style="left:78.5px;top:36.4px;width:1.6px;height:9px;background:#b86a28"></div><div class="a" style="left:69.5px;top:40.0px;width:1.6px;height:7px;background:#7a7a7a"></div><div class="a" style="left:63.8px;top:16.5px;width:12px;height:1.2px;background:#7a7a7a"></div><div class="a" style="left:65.3px;top:27.8px;width:5px;height:1.2px;background:#5f5f5f"></div><div class="a" style="left:14.4px;top:34.2px;width:1.6px;height:7px;background:#909090"></div><div class="a" style="left:80.4px;top:40.1px;width:16px;height:2px;background:#b86a28"></div><div class="a" style="left:38.9px;top:15.5px;width:7px;height:1.6px;background:#c8772e"></div><div class="a" style="left:44.7px;top:34.0px;width:1.6px;height:14px;background:#b86a28"></div><div class="a" style="left:45.8px;top:51.8px;width:9px;height:1.6px;background:#5f5f5f"></div><div class="a" style="left:74.5px;top:20.7px;width:1.2px;height:12px;background:#d08a40"></div><div class="a" style="left:38.0px;top:46.8px;width:13px;height:2px;background:#d08a40"></div><div class="a" style="left:52.3px;top:41.7px;width:14px;height:2px;background:#909090"></div><div class="a" style="left:33.2px;top:53.7px;width:16px;height:2px;background:#7a7a7a"></div><div class="a" style="left:51.4px;top:23.8px;width:5px;height:1.6px;background:#d08a40"></div><div class="a" style="left:58.6px;top:47.3px;width:9px;height:2px;background:#5f5f5f"></div><div class="a" style="left:37.2px;top:49.2px;width:1.6px;height:11px;background:#909090"></div><div class="a" style="left:80.9px;top:35.3px;width:12px;height:1.6px;background:#909090"></div><div class="a" style="left:79.5px;top:33.5px;width:8px;height:1.6px;background:#b86a28"></div><div class="a" style="left:42.0px;top:39.5px;width:15px;height:2px;background:#909090"></div><div class="a" style="left:33.8px;top:36.8px;width:15px;height:1.6px;background:#d08a40"></div><div class="a" style="left:26.1px;top:38.2px;width:16px;height:1.2px;background:#7a7a7a"></div><div class="a" style="left:25.0px;top:43.9px;width:8px;height:2px;background:#b86a28"></div><div class="a" style="left:81.7px;top:33.8px;width:7px;height:1.2px;background:#b86a28"></div><div class="a" style="left:39.4px;top:39.3px;width:12px;height:1.6px;background:#5f5f5f"></div><div class="a" style="left:32.1px;top:30.6px;width:16px;height:1.6px;background:#b86a28"></div><div class="a" style="left:51.6px;top:26.0px;width:1.6px;height:5px;background:#d08a40"></div><div class="a" style="left:33.1px;top:28.1px;width:1.6px;height:14px;background:#d08a40"></div><div class="a" style="left:38.6px;top:19.1px;width:2px;height:13px;background:#5f5f5f"></div><div class="a" style="left:81.7px;top:39.2px;width:12px;height:1.2px;background:#d08a40"></div><div class="a" style="left:19.8px;top:37.3px;width:1.2px;height:11px;background:#909090"></div><div class="a" style="left:14px;top:7px;width:1.5px;height:1.5px;background:#888"></div><div class="a" style="left:14px;top:65px;width:1.5px;height:1.5px;background:#888"></div><div class="a" style="left:36px;top:7px;width:1.5px;height:1.5px;background:#888"></div><div class="a" style="left:36px;top:65px;width:1.5px;height:1.5px;background:#888"></div><div class="a" style="left:57px;top:7px;width:1.5px;height:1.5px;background:#888"></div><div class="a" style="left:57px;top:65px;width:1.5px;height:1.5px;background:#888"></div><div class="a" style="left:79px;top:7px;width:1.5px;height:1.5px;background:#888"></div><div class="a" style="left:79px;top:65px;width:1.5px;height:1.5px;background:#888"></div>
<div class="a" style="left:17px;top:31px;font-size:8.3px;color:#fff;white-space:nowrap;line-height:1">Business Ethics</div>
<div class="a" style="left:34px;top:41px;font-size:5.5px;color:#ddd;white-space:nowrap;line-height:1">Ethical</div>
<div class="a" style="left:36px;top:47px;font-size:6px;color:#d98a3c;white-space:nowrap;line-height:1">Corporate</div>
<div class="a" style="left:33px;top:24px;font-size:5px;color:#d98a3c;white-space:nowrap;line-height:1">Integrity</div>
</div>
<div class="ln" style="left:107px;top:29.0px;width:94px;height:1.1px;background:#6f6c7b"></div><div class="ln" style="left:107px;top:32.2px;width:75px;height:1.1px;background:#6f6c7b"></div>
<div class="a" style="left:107px;top:38.5px;width:95px;height:18px;background:#fafafb;border:1px solid #c7c0ea;border-left:2px solid #5b4ddd;border-radius:2px"></div>
<div class="a" style="left:107px;top:60px;width:95px;height:17.5px;background:#fafafb;border:1px solid #c7c0ea;border-left:2px solid #5b4ddd;border-radius:2px"></div>
<div class="a" style="left:107px;top:80px;width:95px;height:17.5px;background:#fafafb;border:1px solid #c7c0ea;border-left:2px solid #5b4ddd;border-radius:2px"></div>
<div class="ln" style="left:111px;top:42.0px;width:50px;height:1.4px;background:#4b4858"></div><div class="ln" style="left:111px;top:47.5px;width:85px;height:1.1px;background:#6f6c7b"></div><div class="ln" style="left:111px;top:50.5px;width:76px;height:1.1px;background:#6f6c7b"></div>
<div class="ln" style="left:111px;top:63.5px;width:50px;height:1.4px;background:#4b4858"></div><div class="ln" style="left:111px;top:69.0px;width:80px;height:1.1px;background:#6f6c7b"></div><div class="ln" style="left:111px;top:72.0px;width:72px;height:1.1px;background:#6f6c7b"></div>
<div class="ln" style="left:111px;top:83.5px;width:50px;height:1.4px;background:#4b4858"></div><div class="ln" style="left:111px;top:89.0px;width:82px;height:1.1px;background:#6f6c7b"></div><div class="ln" style="left:111px;top:92.0px;width:74px;height:1.1px;background:#6f6c7b"></div>
<div class="ln" style="left:7px;top:111.0px;width:190px;height:1.1px;background:#807d8c"></div><div class="ln" style="left:7px;top:114.0px;width:190px;height:1.1px;background:#807d8c"></div><div class="ln" style="left:7px;top:117.0px;width:76px;height:1.1px;background:#807d8c"></div>
</div>
<div class="th" style="top:1289px">
<div class="tt" style="left:10px;top:9px;font-size:7.5px">Юридичні аспекти агресивного маркетингу</div>
<div class="tt" style="left:10px;top:19px;font-size:4px">Законодавчі обмеження та відповідальність</div>
<div class="a" style="left:10px;top:30px;width:62px;height:1.5px;background:#7d6fe0"></div>
<div class="a" style="left:74px;top:30px;width:62px;height:1.5px;background:#7d6fe0"></div>
<div class="a" style="left:138px;top:30px;width:62px;height:1.5px;background:#7d6fe0"></div>
<div class="ln" style="left:10px;top:34.0px;width:58px;height:1.6px;background:#4b4858"></div><div class="ln" style="left:74px;top:34.0px;width:50px;height:1.6px;background:#4b4858"></div><div class="ln" style="left:74px;top:38.0px;width:30px;height:1.6px;background:#4b4858"></div><div class="ln" style="left:138px;top:34.0px;width:40px;height:1.6px;background:#4b4858"></div>
<div class="ln" style="left:10px;top:45.0px;width:58px;height:1.2px;background:#8a8796"></div><div class="ln" style="left:10px;top:49.3px;width:58px;height:1.2px;background:#8a8796"></div><div class="ln" style="left:10px;top:53.6px;width:58px;height:1.2px;background:#8a8796"></div><div class="ln" style="left:10px;top:57.9px;width:58px;height:1.2px;background:#8a8796"></div><div class="ln" style="left:10px;top:62.2px;width:35px;height:1.2px;background:#8a8796"></div><div class="ln" style="left:74px;top:45.0px;width:58px;height:1.2px;background:#8a8796"></div><div class="ln" style="left:74px;top:49.3px;width:58px;height:1.2px;background:#8a8796"></div><div class="ln" style="left:74px;top:53.6px;width:58px;height:1.2px;background:#8a8796"></div><div class="ln" style="left:74px;top:57.9px;width:35px;height:1.2px;background:#8a8796"></div><div class="ln" style="left:138px;top:41.0px;width:58px;height:1.2px;background:#8a8796"></div><div class="ln" style="left:138px;top:45.3px;width:58px;height:1.2px;background:#8a8796"></div><div class="ln" style="left:138px;top:49.6px;width:58px;height:1.2px;background:#8a8796"></div><div class="ln" style="left:138px;top:53.9px;width:58px;height:1.2px;background:#8a8796"></div><div class="ln" style="left:138px;top:58.2px;width:23px;height:1.2px;background:#8a8796"></div>
<div class="a" style="left:10px;top:75px;width:94px;height:1.5px;background:#7d6fe0"></div>
<div class="a" style="left:106px;top:75px;width:94px;height:1.5px;background:#7d6fe0"></div>
<div class="ln" style="left:10px;top:80.0px;width:70px;height:1.6px;background:#4b4858"></div><div class="ln" style="left:106px;top:80.0px;width:70px;height:1.6px;background:#4b4858"></div>
<div class="ln" style="left:10px;top:85.0px;width:88px;height:1.2px;background:#8a8796"></div><div class="ln" style="left:10px;top:89.2px;width:88px;height:1.2px;background:#8a8796"></div><div class="ln" style="left:10px;top:93.4px;width:53px;height:1.2px;background:#8a8796"></div><div class="ln" style="left:106px;top:85.0px;width:88px;height:1.2px;background:#8a8796"></div><div class="ln" style="left:106px;top:89.2px;width:88px;height:1.2px;background:#8a8796"></div><div class="ln" style="left:106px;top:93.4px;width:53px;height:1.2px;background:#8a8796"></div>
<div class="ln" style="left:10px;top:100.0px;width:190px;height:1.3px;background:#807d8c"></div><div class="ln" style="left:10px;top:104.5px;width:171px;height:1.3px;background:#807d8c"></div>
</div><div class="th" style="top:1445px">
<div class="tt" style="left:10px;top:11px;font-size:7.5px">Помилки надмірно агресивного маркетингу</div>
<div class="tt" style="left:10px;top:21px;font-size:4px">Кейс-стаді: Коли агресія шкодить</div>
<div class="bx" style="left:10px;top:29px;width:62px;height:60px;background:#f4f3fb"></div>
<div class="bx" style="left:74px;top:29px;width:62px;height:60px;background:#f4f3fb"></div>
<div class="bx" style="left:138px;top:29px;width:62px;height:60px;background:#f4f3fb"></div>
<div class="a" style="left:11px;top:30px;width:60px;height:8px;background:#e4e0f6"></div>
<div class="a" style="left:75px;top:30px;width:60px;height:8px;background:#e4e0f6"></div>
<div class="a" style="left:139px;top:30px;width:60px;height:8px;background:#e4e0f6"></div>
<div class="ln" style="left:14px;top:43.0px;width:52px;height:1.5px;background:#4b4858"></div><div class="ln" style="left:14px;top:47.5px;width:26px;height:1.5px;background:#4b4858"></div><div class="ln" style="left:78px;top:43.0px;width:52px;height:1.5px;background:#4b4858"></div><div class="ln" style="left:142px;top:43.0px;width:52px;height:1.5px;background:#4b4858"></div><div class="ln" style="left:142px;top:47.5px;width:31px;height:1.5px;background:#4b4858"></div>
<div class="ln" style="left:14px;top:51.0px;width:54px;height:1.2px;background:#75727f"></div><div class="ln" style="left:14px;top:55.3px;width:54px;height:1.2px;background:#75727f"></div><div class="ln" style="left:14px;top:59.6px;width:54px;height:1.2px;background:#75727f"></div><div class="ln" style="left:14px;top:63.9px;width:54px;height:1.2px;background:#75727f"></div><div class="ln" style="left:14px;top:68.2px;width:54px;height:1.2px;background:#75727f"></div><div class="ln" style="left:14px;top:72.5px;width:54px;height:1.2px;background:#75727f"></div><div class="ln" style="left:14px;top:76.8px;width:54px;height:1.2px;background:#75727f"></div><div class="ln" style="left:14px;top:81.1px;width:32px;height:1.2px;background:#75727f"></div><div class="ln" style="left:78px;top:51.0px;width:54px;height:1.2px;background:#75727f"></div><div class="ln" style="left:78px;top:55.3px;width:54px;height:1.2px;background:#75727f"></div><div class="ln" style="left:78px;top:59.6px;width:54px;height:1.2px;background:#75727f"></div><div class="ln" style="left:78px;top:63.9px;width:54px;height:1.2px;background:#75727f"></div><div class="ln" style="left:78px;top:68.2px;width:54px;height:1.2px;background:#75727f"></div><div class="ln" style="left:78px;top:72.5px;width:54px;height:1.2px;background:#75727f"></div><div class="ln" style="left:78px;top:76.8px;width:54px;height:1.2px;background:#75727f"></div><div class="ln" style="left:78px;top:81.1px;width:32px;height:1.2px;background:#75727f"></div><div class="ln" style="left:142px;top:51.0px;width:54px;height:1.2px;background:#75727f"></div><div class="ln" style="left:142px;top:55.3px;width:54px;height:1.2px;background:#75727f"></div><div class="ln" style="left:142px;top:59.6px;width:54px;height:1.2px;background:#75727f"></div><div class="ln" style="left:142px;top:63.9px;width:54px;height:1.2px;background:#75727f"></div><div class="ln" style="left:142px;top:68.2px;width:54px;height:1.2px;background:#75727f"></div><div class="ln" style="left:142px;top:72.5px;width:54px;height:1.2px;background:#75727f"></div><div class="ln" style="left:142px;top:76.8px;width:54px;height:1.2px;background:#75727f"></div><div class="ln" style="left:142px;top:81.1px;width:32px;height:1.2px;background:#75727f"></div>
<div class="ln" style="left:10px;top:93.0px;width:190px;height:1.3px;background:#807d8c"></div><div class="ln" style="left:10px;top:97.3px;width:190px;height:1.3px;background:#807d8c"></div><div class="ln" style="left:10px;top:101.6px;width:57px;height:1.3px;background:#807d8c"></div>
</div><div class="th" style="top:1601px">
<div class="tt" style="left:7px;top:8px;font-size:6.6px">Розробка власної стратегії агресивного маркетингу</div>
<div class="tt" style="left:7px;top:17px;font-size:3.6px">Від аналізу ринку до реалізації</div>
<div class="a" style="left:7px;top:24px;width:93px;height:71px;background:radial-gradient(ellipse at 45% 40%,#fafafa 0%,#ececec 60%,#cfcfcf 100%);overflow:hidden">
<div class="a" style="left:12px;top:4px;font-size:4.2px;color:#777;white-space:nowrap;line-height:1;letter-spacing:.2px">BUSINESS STRATEGY TEMPLATE</div>
<div class="a" style="left:3.8px;top:16px;width:21px;height:4.5px;background:#2f6aa3;clip-path:polygon(0 0,88% 0,100% 50%,88% 100%,0 100%,10% 50%)"></div><div class="a" style="left:3.8px;top:13px;width:20px;height:1.5px;background:#2f6aa3;opacity:.3"></div><div class="a" style="left:25px;top:16px;width:21px;height:4.5px;background:#1f5585;clip-path:polygon(0 0,88% 0,100% 50%,88% 100%,0 100%,10% 50%)"></div><div class="a" style="left:25px;top:13px;width:20px;height:1.5px;background:#1f5585;opacity:.3"></div><div class="a" style="left:46px;top:16px;width:21.6px;height:4.5px;background:#3d8fd0;clip-path:polygon(0 0,88% 0,100% 50%,88% 100%,0 100%,10% 50%)"></div><div class="a" style="left:46px;top:13px;width:20.6px;height:1.5px;background:#3d8fd0;opacity:.3"></div><div class="a" style="left:68px;top:16px;width:21px;height:4.5px;background:#e8692a;clip-path:polygon(0 0,88% 0,100% 50%,88% 100%,0 100%,10% 50%)"></div><div class="a" style="left:68px;top:13px;width:20px;height:1.5px;background:#e8692a;opacity:.3"></div><div class="a" style="left:4.8px;top:22.8px;width:8.2px;height:5px;background:#2f6aa3"></div><div class="a" style="left:15px;top:22.8px;width:8.2px;height:5px;background:#2f6aa3"></div><div class="a" style="left:4.8px;top:29.5px;width:8.2px;height:5px;background:#2f6aa3"></div><div class="a" style="left:15px;top:29.5px;width:8.2px;height:5px;background:#2f6aa3"></div><div class="a" style="left:4.8px;top:36.3px;width:8.2px;height:5px;background:#2f6aa3"></div><div class="a" style="left:15px;top:36.3px;width:8.2px;height:5px;background:#2f6aa3"></div><div class="a" style="left:4.8px;top:43px;width:8.2px;height:5px;background:#2f6aa3"></div><div class="a" style="left:26px;top:22.8px;width:8.2px;height:5px;background:#1f5585"></div><div class="a" style="left:36px;top:22.8px;width:8.2px;height:5px;background:#1f5585"></div><div class="a" style="left:26px;top:29.5px;width:8.2px;height:5px;background:#1f5585"></div><div class="a" style="left:36px;top:29.5px;width:8.2px;height:5px;background:#1f5585"></div><div class="a" style="left:26px;top:36.3px;width:8.2px;height:5px;background:#1f5585"></div><div class="a" style="left:46.8px;top:22.8px;width:8.2px;height:5px;background:#3d8fd0"></div><div class="a" style="left:57px;top:22.8px;width:8.2px;height:5px;background:#3d8fd0"></div><div class="a" style="left:46.8px;top:29.5px;width:8.2px;height:5px;background:#3d8fd0"></div><div class="a" style="left:57px;top:29.5px;width:8.2px;height:5px;background:#3d8fd0"></div><div class="a" style="left:46.8px;top:36.3px;width:8.2px;height:5px;background:#3d8fd0"></div><div class="a" style="left:57px;top:36.3px;width:8.2px;height:5px;background:#3d8fd0"></div><div class="a" style="left:68px;top:22.8px;width:8.2px;height:5px;background:#e8692a"></div><div class="a" style="left:77.7px;top:22.8px;width:8.2px;height:5px;background:#e8692a"></div><div class="a" style="left:68px;top:29.5px;width:8.2px;height:5px;background:#e8692a"></div><div class="a" style="left:77.7px;top:29.5px;width:8.2px;height:5px;background:#e8692a"></div><div class="a" style="left:68px;top:36.3px;width:8.2px;height:5px;background:#e8692a"></div><div class="a" style="left:77.7px;top:36.3px;width:8.2px;height:5px;background:#e8692a"></div><div class="a" style="left:68px;top:43px;width:8.2px;height:5px;background:#e8692a"></div><div class="ln" style="left:6px;top:51.0px;width:17px;height:1px;background:#999"></div><div class="ln" style="left:6px;top:54.0px;width:17px;height:1px;background:#999"></div><div class="ln" style="left:6px;top:57.0px;width:12px;height:1px;background:#999"></div><div class="ln" style="left:27px;top:51.0px;width:17px;height:1px;background:#999"></div><div class="ln" style="left:27px;top:54.0px;width:17px;height:1px;background:#999"></div><div class="ln" style="left:27px;top:57.0px;width:12px;height:1px;background:#999"></div><div class="ln" style="left:48px;top:51.0px;width:17px;height:1px;background:#999"></div><div class="ln" style="left:48px;top:54.0px;width:17px;height:1px;background:#999"></div><div class="ln" style="left:48px;top:57.0px;width:12px;height:1px;background:#999"></div><div class="ln" style="left:69px;top:51.0px;width:17px;height:1px;background:#999"></div><div class="ln" style="left:69px;top:54.0px;width:17px;height:1px;background:#999"></div><div class="ln" style="left:69px;top:57.0px;width:12px;height:1px;background:#999"></div>
</div>
<div class="a" style="left:111px;top:24px;width:4px;height:16px;background:#e4e0f6"></div>
<div class="a" style="left:114px;top:43px;width:4px;height:16px;background:#e4e0f6"></div>
<div class="a" style="left:117px;top:61px;width:4px;height:17px;background:#e4e0f6"></div>
<div class="a" style="left:120px;top:80px;width:4px;height:17px;background:#e4e0f6"></div>
<div class="ln" style="left:120px;top:27.0px;width:26px;height:1.3px;background:#4b4858"></div><div class="ln" style="left:120px;top:33.0px;width:82px;height:1.0px;background:#6f6c7b"></div><div class="ln" style="left:120px;top:36.0px;width:74px;height:1.0px;background:#6f6c7b"></div>
<div class="ln" style="left:123px;top:46.0px;width:34px;height:1.3px;background:#4b4858"></div><div class="ln" style="left:123px;top:52.0px;width:82px;height:1.0px;background:#6f6c7b"></div><div class="ln" style="left:123px;top:55.0px;width:57px;height:1.0px;background:#6f6c7b"></div>
<div class="ln" style="left:126px;top:64.0px;width:34px;height:1.3px;background:#4b4858"></div><div class="ln" style="left:126px;top:71.0px;width:78px;height:1.0px;background:#6f6c7b"></div><div class="ln" style="left:126px;top:74.0px;width:78px;height:1.0px;background:#6f6c7b"></div><div class="ln" style="left:126px;top:77.0px;width:16px;height:1.0px;background:#6f6c7b"></div>
<div class="ln" style="left:129px;top:83.0px;width:28px;height:1.3px;background:#4b4858"></div><div class="ln" style="left:129px;top:90.0px;width:72px;height:1.0px;background:#6f6c7b"></div><div class="ln" style="left:129px;top:93.0px;width:72px;height:1.0px;background:#6f6c7b"></div><div class="ln" style="left:129px;top:96.0px;width:14px;height:1.0px;background:#6f6c7b"></div>
<div class="ln" style="left:7px;top:110.0px;width:194px;height:1.1px;background:#807d8c"></div><div class="ln" style="left:7px;top:113.0px;width:194px;height:1.1px;background:#807d8c"></div><div class="ln" style="left:7px;top:116.0px;width:19px;height:1.1px;background:#807d8c"></div>
</div>
<div class="num" style="left:13px;top:1758.5px">10</div><div class="a" style="left:56px;top:1750px;width:224px;height:132px;border-radius:19px;background:#d9735c"></div><div class="th" id="th10" style="top:1756px;background:#f3f2f7"><div id="mini" class="a" style="left:-2px;top:-2px;width:3044px;height:1714px;transform:scale(0.06965);transform-origin:0 0">
  <div class="t ser" style="left:155px;top:116px;font-size:97px;letter-spacing:1.6px;color:#201b6c;-webkit-text-stroke:1.6px #201b6c">Висновки та рекомендації</div>
  <div class="t ser" style="left:155px;top:245.5px;font-size:56px;letter-spacing:1.2px;color:#201b6c;-webkit-text-stroke:1px #201b6c">Баланс між ризиком і прибутком</div>

  <div class="card" style="left:152px">
    <div class="circ"><svg class="a" style="left:31px;top:32px" width="50" height="50" viewBox="0 0 24 24" fill="none" stroke="#fff" stroke-width="1.1" stroke-linecap="round">
 <path d="M12.2 2.6 A8.3 8.3 0 1 0 11 19.3"/><path d="M13.6 5.6 A5.5 5.5 0 1 0 11.3 16.3"/><path d="M13 8.6 A2.9 2.9 0 1 0 11.2 13.7"/>
 <path d="M11 0.3 V2.6 M0.5 10.8 H2.8 M18.3 11 H21.5 M11 19.5 V21.6"/>
 <path d="M11.6 11 L20.2 3"/><path d="M18.5 1 L18.7 3.6 L21.4 3.9 L23 2.1 L20.4 1.7 L20.1 -0.2 Z"/>
 <path d="M16 8 L16.7 10.8 M14.5 9.6 L14.8 10.8"/>
 <circle cx="17.9" cy="17.4" r="6" fill="#5b4ddd"/><path d="M15.2 17.2 L17.1 19.1 L20.6 15.6"/>
</svg></div>
    <div class="ch ser" style="top:194.5px;letter-spacing:0.76px">Розумна агресія перемагає</div>
    <div class="bd" style="top:274px">Агресивний маркетинг, оснований на<br>глибокому розумінні аудиторії та етичних<br>принципах, створює довгострокову<br>конкурентну перевагу та укріплює<br>лояльність бренду.</div>
  </div>
  <div class="card" style="left:1078px">
    <div class="circ"><svg class="a" style="left:31px;top:32px" width="50" height="50" viewBox="0 0 24 24" fill="none" stroke="#fff" stroke-width="1.1" stroke-linejoin="round">
 <rect x="1" y="3.2" width="3.5" height="8.8"/><rect x="18" y="3.2" width="3.5" height="8.8"/>
 <path d="M4.5 4 L7.8 2.2 Q9.5 1.5 10.6 2.1"/>
 <path d="M17.9 4.2 L15 1.4 Q13.6 0.4 12 1.1 L7.4 4.6 Q6.6 5.6 7.5 6.4 Q8.4 7.1 9.4 6.4 L12 4.2 L16.8 10.2"/>
 <path d="M4.5 11.5 L9.6 16.2 Q10.4 16.8 11.2 16.2 Q11.8 15.4 11.2 14.7"/>
 <path d="M9.6 12.6 L11.2 14.1 M11.6 11.2 L13 12.6"/>
 <rect x="13" y="11.5" width="10.5" height="11.7" rx="1"/>
 <path d="M15.3 14.3 H19.8 M15.3 16.9 H19.2 M15.3 19.5 H17.6"/>
</svg></div>
    <div class="ch ser" style="top:194.5px;letter-spacing:0.14px">Етика – основа успіху</div>
    <div class="bd" style="top:274px">Компанії, які дотримуються етичних норм<br>під час агресивного маркетингу,<br>отримують довіру споживачів та<br>економлять на судових тяжбах та<br>репутаційній шкоді.</div>
  </div>
  <div class="card" style="left:2003px">
    <div class="circ"><svg class="a" style="left:31px;top:32px" width="50" height="50" viewBox="0 0 24 24" fill="none" stroke="#fff" stroke-width="1.1" stroke-linecap="round">
 <circle cx="10.3" cy="9.2" r="8.6"/>
 <path d="M16.4 15.4 L21.7 20.7 Q22.6 21.6 23.3 20.8 Q24 20 23.1 19.1 L17.8 14"/>
 <path d="M4.5 12.7 L8.2 8.6 L11.6 11.2 L16 5.2"/><path d="M13.7 4.9 H16.3 V7.5"/>
 <circle cx="8.2" cy="8.6" r="0.5"/><circle cx="11.6" cy="11.2" r="0.5"/>
</svg></div>
    <div class="ch ser" style="top:194.5px;letter-spacing:0.84px">Вимірювання результатів необхідне</div>
    <div class="bd" style="top:333px">Кожна кампанія повинна мати чіткі метрики<br>успіху. ROI, залучення аудиторії та<br>репутаційний вплив мають бути постійно<br>відстежуватися і аналізуватися.</div>
  </div>

  <div class="a" style="left:153px;top:1020px;width:4px;height:205px;background:#5b4ddd"></div>
  <div class="bd" style="left:209px;top:1067.5px;line-height:60px">"Агресивний маркетинг – це не про тиск на споживача, а про включення його у вирішенні, про створення емоційної реакції та довгострокової<br>взаємодії. Найзуспішніші бренди роблять це з чесністю, творчістю та повагою."</div>

  <div class="a" style="left:152px;top:1267px;width:2739px;height:341px;background:#e8e5f8;border:2px solid #b8b2dc;border-radius:14px"></div>
  <div class="a" style="left:1522px;top:1269px;width:5px;height:337px;background:#bab5dc;border-radius:2px"></div>
  <div class="ch ser" style="left:192px;top:1312.5px;letter-spacing:1.2px">Ключовий виклик 2024-2025</div>
  <div class="bd" style="left:192px;top:1393px;line-height:59.5px">Агресивний маркетинг у світі, де споживачі все більш цинічні та<br>інформовані, вимагає переходу від традиційної маніпуляції до<br>автентичної, цінної комунікації, яка створює справжню взаємодію.</div>
  <div class="ch ser" style="left:1560px;top:1312.5px;letter-spacing:0.33px">Рекомендація: Стратегічна рівновага</div>
  <div class="bd" style="left:1560px;top:1393px;line-height:59.5px">Використовуйте агресивність там, де вона створює цінність, але<br>будьте готові до адаптації та розвитку. Найрозумніший маркетинг –<br>це той, який постійно розвивається разом з ринком та аудиторією.</div>
</div></div><div class="a" style="left:28px;top:1930px;width:96px;height:96px;border-radius:50%;background:#282a2e"></div>
<svg class="a" style="left:53px;top:1953px" width="48" height="52" viewBox="0 0 48 52">
 <path d="M4 40 V31 L30 5 Q32 3 34 5 L40 11 Q42 13 40 15 L14 41 H4 Z" fill="none" stroke="#6ef29a" stroke-width="3.4" stroke-linejoin="round"/>
 <path d="M25 10 L36 21" stroke="#6ef29a" stroke-width="3.4"/>
 <path d="M4 47.5 H42" stroke="#6ef29a" stroke-width="3.4" stroke-linecap="round"/>
</svg>
<!-- SLIDE -->
<div id="slide" class="a">
  <div class="t ser" style="left:155px;top:116px;font-size:97px;letter-spacing:1.6px;color:#201b6c;-webkit-text-stroke:1.6px #201b6c">Висновки та рекомендації</div>
  <div class="t ser" style="left:155px;top:245.5px;font-size:56px;letter-spacing:1.2px;color:#201b6c;-webkit-text-stroke:1px #201b6c">Баланс між ризиком і прибутком</div>

  <div class="card" style="left:152px">
    <div class="circ"><svg class="a" style="left:31px;top:32px" width="50" height="50" viewBox="0 0 24 24" fill="none" stroke="#fff" stroke-width="1.1" stroke-linecap="round">
 <path d="M12.2 2.6 A8.3 8.3 0 1 0 11 19.3"/><path d="M13.6 5.6 A5.5 5.5 0 1 0 11.3 16.3"/><path d="M13 8.6 A2.9 2.9 0 1 0 11.2 13.7"/>
 <path d="M11 0.3 V2.6 M0.5 10.8 H2.8 M18.3 11 H21.5 M11 19.5 V21.6"/>
 <path d="M11.6 11 L20.2 3"/><path d="M18.5 1 L18.7 3.6 L21.4 3.9 L23 2.1 L20.4 1.7 L20.1 -0.2 Z"/>
 <path d="M16 8 L16.7 10.8 M14.5 9.6 L14.8 10.8"/>
 <circle cx="17.9" cy="17.4" r="6" fill="#5b4ddd"/><path d="M15.2 17.2 L17.1 19.1 L20.6 15.6"/>
</svg></div>
    <div class="ch ser" style="top:194.5px;letter-spacing:0.76px">Розумна агресія перемагає</div>
    <div class="bd" style="top:274px">Агресивний маркетинг, оснований на<br>глибокому розумінні аудиторії та етичних<br>принципах, створює довгострокову<br>конкурентну перевагу та укріплює<br>лояльність бренду.</div>
  </div>
  <div class="card" style="left:1078px">
    <div class="circ"><svg class="a" style="left:31px;top:32px" width="50" height="50" viewBox="0 0 24 24" fill="none" stroke="#fff" stroke-width="1.1" stroke-linejoin="round">
 <rect x="1" y="3.2" width="3.5" height="8.8"/><rect x="18" y="3.2" width="3.5" height="8.8"/>
 <path d="M4.5 4 L7.8 2.2 Q9.5 1.5 10.6 2.1"/>
 <path d="M17.9 4.2 L15 1.4 Q13.6 0.4 12 1.1 L7.4 4.6 Q6.6 5.6 7.5 6.4 Q8.4 7.1 9.4 6.4 L12 4.2 L16.8 10.2"/>
 <path d="M4.5 11.5 L9.6 16.2 Q10.4 16.8 11.2 16.2 Q11.8 15.4 11.2 14.7"/>
 <path d="M9.6 12.6 L11.2 14.1 M11.6 11.2 L13 12.6"/>
 <rect x="13" y="11.5" width="10.5" height="11.7" rx="1"/>
 <path d="M15.3 14.3 H19.8 M15.3 16.9 H19.2 M15.3 19.5 H17.6"/>
</svg></div>
    <div class="ch ser" style="top:194.5px;letter-spacing:0.14px">Етика – основа успіху</div>
    <div class="bd" style="top:274px">Компанії, які дотримуються етичних норм<br>під час агресивного маркетингу,<br>отримують довіру споживачів та<br>економлять на судових тяжбах та<br>репутаційній шкоді.</div>
  </div>
  <div class="card" style="left:2003px">
    <div class="circ"><svg class="a" style="left:31px;top:32px" width="50" height="50" viewBox="0 0 24 24" fill="none" stroke="#fff" stroke-width="1.1" stroke-linecap="round">
 <circle cx="10.3" cy="9.2" r="8.6"/>
 <path d="M16.4 15.4 L21.7 20.7 Q22.6 21.6 23.3 20.8 Q24 20 23.1 19.1 L17.8 14"/>
 <path d="M4.5 12.7 L8.2 8.6 L11.6 11.2 L16 5.2"/><path d="M13.7 4.9 H16.3 V7.5"/>
 <circle cx="8.2" cy="8.6" r="0.5"/><circle cx="11.6" cy="11.2" r="0.5"/>
</svg></div>
    <div class="ch ser" style="top:194.5px;letter-spacing:0.84px">Вимірювання результатів необхідне</div>
    <div class="bd" style="top:333px">Кожна кампанія повинна мати чіткі метрики<br>успіху. ROI, залучення аудиторії та<br>репутаційний вплив мають бути постійно<br>відстежуватися і аналізуватися.</div>
  </div>

  <div class="a" style="left:153px;top:1020px;width:4px;height:205px;background:#5b4ddd"></div>
  <div class="bd" style="left:209px;top:1067.5px;line-height:60px">"Агресивний маркетинг – це не про тиск на споживача, а про включення його у вирішенні, про створення емоційної реакції та довгострокової<br>взаємодії. Найзуспішніші бренди роблять це з чесністю, творчістю та повагою."</div>

  <div class="a" style="left:152px;top:1267px;width:2739px;height:341px;background:#e8e5f8;border:2px solid #b8b2dc;border-radius:14px"></div>
  <div class="a" style="left:1522px;top:1269px;width:5px;height:337px;background:#bab5dc;border-radius:2px"></div>
  <div class="ch ser" style="left:192px;top:1312.5px;letter-spacing:1.2px">Ключовий виклик 2024-2025</div>
  <div class="bd" style="left:192px;top:1393px;line-height:59.5px">Агресивний маркетинг у світі, де споживачі все більш цинічні та<br>інформовані, вимагає переходу від традиційної маніпуляції до<br>автентичної, цінної комунікації, яка створює справжню взаємодію.</div>
  <div class="ch ser" style="left:1560px;top:1312.5px;letter-spacing:0.33px">Рекомендація: Стратегічна рівновага</div>
  <div class="bd" style="left:1560px;top:1393px;line-height:59.5px">Використовуйте агресивність там, де вона створює цінність, але<br>будьте готові до адаптації та розвитку. Найрозумніший маркетинг –<br>це той, який постійно розвивається разом з ринком та аудиторією.</div>
</div>

<!-- WEBCAM -->
<div class="a" style="left:0;top:0;z-index:10">
<div class="a" style="left:2930.2px;top:236.2px;width:483px;height:273px;border-radius:17px;background:#212121;box-shadow:inset 0 0 0 2.4px #0b0b0b,0 0 0 1.5px #474747,0 0 0 2.7px #080808,0 5px 16px rgba(0,0,0,.35)"></div>
<div class="a" style="left:3071px;top:238px;width:202px;height:270px;overflow:hidden;background:#5b3d31">
  <div class="a" style="left:0;top:0;width:202px;height:270px;background:
    repeating-linear-gradient(60deg,rgba(255,215,190,.13) 0 11px,rgba(0,0,0,0) 11px 22px),
    repeating-linear-gradient(-60deg,rgba(0,0,0,.25) 0 11px,rgba(0,0,0,0) 11px 22px),
    linear-gradient(180deg,#6a4a3c 0%,#5a3b30 60%,#4a3028 100%)"></div>
  <svg class="a" style="left:0;top:0" width="202" height="40"><path d="M68 0 H202 V17 Z" fill="#c9c9bf"/></svg>
  <div class="a" style="left:100px;top:147px;width:45px;height:40px;background:#2b2d30;border-radius:8px"></div>
  <div class="a" style="left:-10px;top:156px;width:130px;height:120px;border-radius:30px 40px 0 0;background:repeating-linear-gradient(176deg,#4b2f26 0 13px,#ecebe8 13px 20px)"></div>
  <div class="a" style="left:90px;top:150px;width:112px;height:120px;clip-path:polygon(10% 8%,45% 20%,100% 55%,100% 100%,0 100%,0 20%);background:repeating-linear-gradient(152deg,#4b2f26 0 14px,#ecebe8 14px 21px)"></div>
  <div class="a" style="left:42px;top:148px;width:64px;height:28px;border-radius:40% 40% 30% 30%;background:#4b2f26"></div>
  <div class="a" style="left:44px;top:93px;width:60px;height:76px;border-radius:44% 44% 48% 48%;background:radial-gradient(ellipse at 50% 40%,#e8c4b2 0%,#dcae98 55%,#c08a74 100%)"></div>
  <div class="a" style="left:47px;top:84px;width:52px;height:20px;border-radius:50% 50% 25% 25%;background:#6c5242"></div>
  <div class="a" style="left:56px;top:150px;width:38px;height:20px;border-radius:0 0 50% 50%;background:#b08e80"></div>
  <div class="a" style="left:58px;top:174px;width:4px;height:45px;background:#c8c8c8"></div>
</div>
<div class="a" style="left:2937px;top:468px;width:221px;height:39px;background:#262626;border-radius:0 9px 0 0"></div>
<div class="t" style="left:2940px;top:475.5px;font-size:25.2px;color:#fafafa;-webkit-text-stroke:0.6px #fafafa">Зікранець Микола</div>

</div>
</body></html>
